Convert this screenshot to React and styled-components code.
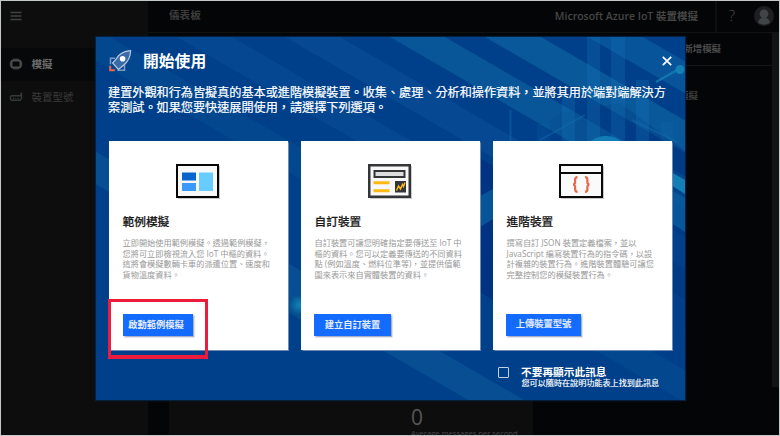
import React from "react";
import styled, { createGlobalStyle } from "styled-components";

const Global = createGlobalStyle`
  * { box-sizing: border-box; }
  html, body { margin: 0; padding: 0; overflow: hidden; background: #040507; }
  body { font-family: "Open Sans", "Noto Sans CJK TC", sans-serif; }
  button { font-family: inherit; }
`;

const Frame = styled.div`
  position: relative;
  width: 780px;
  height: 436px;
  display: flex;
  overflow: hidden;
  background: #040507;
  border: 1px solid #c3c9c8;
`;

const Sidebar = styled.nav`
  width: 147px;
  flex: none;
  background: #0d0d0d;
  display: flex;
  flex-direction: column;
`;

const MenuToggle = styled.div`
  height: 47px;
  padding: 10px 0 0 9px;
  svg { display: block; }
`;

const NavItem = styled.div`
  height: 33px;
  display: flex;
  align-items: center;
  gap: 8.5px;
  padding: 0 0 1px 8px;
  font-size: 10.5px;
  line-height: 16px;
  font-weight: ${(p) => (p.$active ? 700 : 400)};
  color: ${(p) => (p.$active ? "#6c6c6c" : "#3b3b3b")};
  background: ${(p) => (p.$active ? "#07080a" : "transparent")};
  svg { color: ${(p) => (p.$active ? "#4c4c4c" : "#34393c")}; flex: none; }
`;

const Main = styled.main`
  flex: 1;
  min-width: 0;
  display: flex;
  flex-direction: column;
`;

const Header = styled.header`
  height: 32px;
  flex: none;
  display: flex;
  align-items: center;
  padding-left: 21px;
  border-bottom: 1px solid #111214;
`;

const HeaderTitle = styled.div`
  font-size: 10.6px;
  line-height: 16px;
  padding-bottom: 3px;
  font-weight: 700;
  color: #3c3c3c;
`;

const Product = styled.div`
  margin-left: auto;
  padding: 0 17px 1px 0;
  font-size: 10.5px;
  line-height: 16px;
  font-weight: 600;
  color: #454545;
  white-space: nowrap;
`;

const Help = styled.div`
  width: 35px;
  height: 31px;
  line-height: 29px;
  padding-right: 3px;
  border-left: 2px solid #0d0e10;
  font-size: 15px;
  font-weight: 300;
  color: #4c4c4c;
  text-align: center;
`;

const Avatar = styled.div`
  width: 29px;
  padding: 0 0 1px 4px;
  svg { display: block; }
`;

const Body = styled.div`
  flex: 1;
  min-height: 0;
  display: flex;
`;

const Board = styled.section`
  flex: 1;
  display: flex;
  flex-direction: column;
`;

const Toolbar = styled.div`
  height: 33px;
  flex: none;
  border-bottom: 1px solid #151617;
  padding: 8px 51px 0 0;
  text-align: right;
  font-size: 9.4px;
  line-height: 16px;
  font-weight: 700;
  color: #4b4b4b;
`;

const BoardLabel = styled.div`
  padding: 22px 74px 0 0;
  text-align: right;
  font-size: 9.4px;
  line-height: 16px;
  font-weight: 700;
  color: #3e3e3e;
`;

const Metric = styled.div`
  width: 364px;
  height: 45px;
  margin: auto 0 0 21px;
  padding: 16px 0 0 242px;
  background: #0d0d0d;
  color: #565656;
  overflow: hidden;
`;

const MetricValue = styled.div`
  font-size: 21px;
  line-height: 22px;
  height: 22px;
`;

const MetricLabel = styled.div`
  font-size: 7.6px;
  line-height: 10px;
  height: 10px;
  color: #484848;
  white-space: nowrap;
`;

const Scrollbar = styled.div`
  width: 7px;
  height: 354px;
  background: #121315;
`;

const Modal = styled.section`
  position: absolute;
  left: 95px;
  top: 36px;
  width: 589px;
  height: 363px;
  overflow: hidden;
  background: #00408a;
  box-shadow: 0 0 1px 1px #06203f;
`;

const Art = styled.svg`
  position: absolute;
  inset: 0;
`;

const Content = styled.div`
  position: relative;
  height: 100%;
  padding: 11px 13px 0;
  display: flex;
  flex-direction: column;
  color: #fff;
`;

const TitleBar = styled.div`
  height: 25px;
  margin-left: -1px;
  display: flex;
  align-items: center;
  gap: 11px;
`;

const Title = styled.h1`
  margin: 0;
  font-size: 15.8px;
  line-height: 24px;
  font-weight: 700;
`;

const Close = styled.button`
  margin-left: auto;
  padding: 0;
  border: 0;
  background: none;
  height: 10px;
  display: flex;
`;

const Intro = styled.p`
  margin: 13px 0 0 -1px;
  font-size: 12.13px;
  line-height: 14.5px;
  white-space: pre;
  -webkit-text-stroke: 0.2px #fff;
`;

const Cards = styled.div`
  margin-top: 26px;
  display: grid;
  grid-template-columns: 179px 179px 179px;
  column-gap: 13px;
`;

const Card = styled.article`
  height: 209px;
  background: #fff;
  box-shadow: 0 0 1px 0.5px #6d8bb5;
  display: flex;
  flex-direction: column;
  align-items: flex-start;
  padding: 23px 0 0 14px;
`;

const IconSlot = styled.div`
  align-self: center;
  height: 38px;
  margin-left: -16px;
  svg { display: block; }
`;

const CardTitle = styled.h2`
  margin: 10px 0 0 -0.5px;
  font-size: 11.7px;
  line-height: 18px;
  height: 18px;
  font-weight: 500;
  color: #1a1a1a;
  -webkit-text-stroke: 0.2px #1a1a1a;
`;

const CardText = styled.p`
  margin: 8px 0 0 -0.5px;
  font-size: 8.2px;
  line-height: 10.7px;
  height: 43px;
  white-space: pre;
  color: #999;
`;

const Action = styled.button`
  width: ${(p) => p.$width}px;
  height: 22px;
  margin: 33px 0 0 ${(p) => p.$shift || 0}px;
  padding: 0 ${(p) => p.$end}px ${(p) => p.$lift || 0}px 0;
  border: 0;
  background: #136bff;
  box-shadow: 1px 1px 1.5px 0.5px #a8aec4;
  color: #e6edff;
  font-size: 9.25px;
  line-height: 20px;
  font-weight: ${(p) => (p.$lift ? 500 : 700)};
  -webkit-text-stroke: ${(p) => (p.$lift ? "0.2px #e6edff" : "0")};
  white-space: nowrap;
`;

const Footer = styled.label`
  margin: 16px 0 0 389px;
  display: flex;
  gap: 12px;
`;

const Checkbox = styled.span`
  width: 11px;
  height: 11px;
  margin-top: 1px;
  border: 1px solid #c3cfe2;
  border-radius: 1px;
`;

const FooterText = styled.span`
  display: flex;
  flex-direction: column;
  white-space: nowrap;
`;

const FooterMain = styled.span`
  font-size: 10.7px;
  line-height: 12px;
  height: 12px;
  font-weight: 700;
`;

const FooterHint = styled.span`
  font-size: 8.1px;
  line-height: 10px;
  padding-left: 0.5px;
  -webkit-text-stroke: 0.15px #fff;
`;

const Highlight = styled.div`
  position: absolute;
  left: 107px;
  top: 298px;
  width: 100px;
  height: 60px;
  border: 3px solid #ee1c3c;
  border-bottom-width: 4px;
`;

const MenuIcon = () => (
  <svg width="12" height="10" viewBox="0 0 12 10">
    <path d="M0.5 1.5h11M0.5 5h11M0.5 8.5h11" stroke="#3f4343" strokeWidth="1.4" />
  </svg>
);

const ChipIcon = () => (
  <svg width="14" height="14" viewBox="0 0 14 14" fill="none" stroke="currentColor">
    <rect x="2.5" y="3.5" width="9" height="7" rx="1.5" strokeWidth="2" />
    <path d="M4 2.2h6M4 11.8h6M1.4 5v4M12.6 5v4" strokeWidth="1" />
  </svg>
);

const DeviceIcon = () => (
  <svg width="14" height="12" viewBox="0 0 14 12" fill="none" stroke="currentColor">
    <path d="M2.5 4.8h9l1-3v5.5l-1.5 2H2.5l-1-1V5.7z" strokeWidth="1.4" />
    <path d="M4 7.3h1M6.2 7.3h1M8.4 7.3h1" strokeWidth="1.2" />
  </svg>
);

const UserIcon = () => (
  <svg width="20" height="20" viewBox="0 0 20 20">
    <circle cx="10" cy="10" r="10" fill="#1d1e20" />
    <circle cx="10" cy="7.8" r="4.4" fill="#414446" />
    <path d="M4 16.5c.8-3.6 3-4.7 6-4.7s5.2 1.1 6 4.7c-3 2.8-9 2.8-12 0z" fill="#414446" />
  </svg>
);

const RocketIcon = () => (
  <svg width="24" height="24" viewBox="0 0 24 24">
    <path d="M7 9.2H2.5v6M9.5 21.3h7v-6" fill="none" stroke="#7d9cc4" strokeWidth="1.5" />
    <path d="M22.6 1.6C16 2 11 5 8.5 9.6L4.6 14l5.8 6.5 4.8-4C19.5 13.5 22.5 8 22.6 1.6z" fill="#3a6aa8" stroke="#b9c9de" strokeWidth="1.2" />
    <circle cx="14.6" cy="9.8" r="2.8" fill="#fff" />
    <path d="M2.2 16.8v4.5h4.6" fill="none" stroke="#f0664a" strokeWidth="2" />
  </svg>
);

const CloseIcon = () => (
  <svg width="10" height="10" viewBox="0 0 10 10">
    <path d="M.8.8l8.4 8.4M9.2.8L.8 9.2" stroke="#fff" strokeWidth="1.7" />
  </svg>
);

const DashboardIcon = () => (
  <svg width="44" height="35" viewBox="0 0 44 35">
    <rect x="2" y="2" width="42" height="33" fill="#c9c9c9" />
    <rect x="1" y="1" width="41" height="32" fill="#f8f8f8" stroke="#050505" strokeWidth="2" />
    <rect x="6" y="8.5" width="14" height="8" fill="#0963cf" />
    <rect x="6" y="19" width="14" height="8" fill="#3a99fb" />
    <rect x="23" y="8.5" width="14" height="18.5" fill="#67ccff" />
  </svg>
);

const CustomIcon = () => (
  <svg width="44" height="35" viewBox="0 0 44 35">
    <rect x="2" y="2" width="42" height="33" fill="#cacaca" />
    <rect x="1.25" y="1.25" width="40.5" height="31.5" fill="#f8f8f8" stroke="#333536" strokeWidth="2.5" />
    <rect x="6.5" y="7" width="30" height="6" fill="#ddd" stroke="#333536" strokeWidth="2" />
    <path d="M5.5 18.8h16M5.5 26.8h16" stroke="#fdb913" strokeWidth="3" />
    <rect x="27" y="17" width="11" height="11.5" fill="#333536" />
    <path d="M28.5 26.5l2-4.5 2 3 2-4.5 1 2 1.5-4" fill="none" stroke="#fdb913" strokeWidth="1.4" />
  </svg>
);

const JsonIcon = () => (
  <svg width="45" height="35" viewBox="0 0 45 35">
    <rect x="2" y="2" width="43" height="33" fill="#cacaca" />
    <rect x="1" y="1" width="42" height="32" fill="#fafafa" stroke="#090909" strokeWidth="2" />
    <path d="M1 9h42" stroke="#090909" strokeWidth="2" />
    <path d="M18.5 13.2c-2.2 0-2.4.8-2.4 2.5v2.3c0 1.500-.5 2.300-2 2.500 1.500.2 2 1 2 2.500v2.300c0 1.700.2 2.500 2.400 2.500M26 13.200c2.200 0 2.400.8 2.400 2.500v2.300c0 1.500.5 2.300 2 2.500-1.500.2-2 1-2 2.500v2.300c0 1.700-.2 2.500-2.400 2.500" fill="none" stroke="#e8694a" strokeWidth="2.2" />
  </svg>
);

/* Diagonal bands: [x at the top edge, width, colour, opacity] */
const BANDS = [
  [-158, 56, "#0d5c9c", 0.5],
  [55, 55, "#0b5a9c", 0.3],
  [177, 55, "#0e559e", 0.35],
  [285, 55, "#0e559e", 0.4],
  [390, 55, "#0b5d9c", 0.75],
  [485, 56, "#0b5d9c", 0.85],
  [588, 55, "#0b62a5", 0.6],
];

const Backdrop = () => (
  <Art width="589" height="363" viewBox="96 37 589 363">
    <defs>
      <linearGradient id="deep" x1="0" x2="1">
        <stop offset="0" stopColor="#00337f" stopOpacity="0" />
        <stop offset="1" stopColor="#00337f" />
      </linearGradient>
      <radialGradient id="glow">
        <stop offset="0" stopColor="#178fbd" />
        <stop offset="1" stopColor="#178fbd" stopOpacity="0" />
      </radialGradient>
    </defs>
    {BANDS.map(([x, w, fill, o]) => (
      <polygon key={x} points={`${x},37 ${x + w},37 ${x + w + 640},408 ${x + 640},408`} fill={fill} opacity={o} />
    ))}
    <path d="M480 158l13 8V300l-13-8z" fill="#002f7e" opacity=".8" />
    <path d="M520 141l40-28 60-10 65 48v180l-14-8V141z" fill="url(#deep)" opacity=".45" />
    <path d="M480 196l13-7v30l-13 8zM671 190l14 8v34l-14-9z" fill="#095c9f" opacity=".8" />
    <path d="M671 172l14 8v14l-14-9z" fill="#147fb4" />
    <path d="M288 292l13 8v20l-13-8z" fill="#075591" opacity=".7" />
    <circle cx="299" cy="305" r="10" fill="url(#glow)" opacity=".8" />
    <g fill="#1878bd" opacity=".27">
      <rect x="587" y="37" width="13" height="104" />
      <rect x="611" y="37" width="14" height="104" />
      <rect x="562" y="95" width="13" height="46" />
      <rect x="636" y="80" width="13" height="61" />
      <rect x="537" y="124" width="13" height="17" opacity=".5" />
      <rect x="661" y="122" width="12" height="19" opacity=".5" />
    </g>
    <path d="M510.5 110v31M540 140l45-25M632 120l45 22" stroke="#1670b5" strokeWidth="2" opacity=".4" fill="none" />
    <path d="M656 82l23-13" stroke="#137fb5" strokeWidth="2.5" opacity=".8" />
    <circle cx="680" cy="69.5" r="4.5" fill="#1480b3" />
    <ellipse cx="606" cy="146" rx="17" ry="10" fill="#137bb5" />
  </Art>
);

const OPTIONS = [
  {
    title: "範例模擬",
    icon: <DashboardIcon />,
    text: "立即開始使用範例模擬。透過範例模擬\uFF0C\n您將可立即檢視流入您 IoT 中樞的資料。\n這將會模擬數輛卡車的派遣位置、速度和\n貨物溫度資料。",
    action: "啟動範例模擬",
    width: 70,
    end: 4,
  },
  {
    title: "自訂裝置",
    icon: <CustomIcon />,
    text: "自訂裝置可讓您明確指定要傳送至 IoT 中\n樞的資料。您可以定義要傳送的不同資料\n點 (例如溫度、燃料位準等)\uFF0C並提供值範\n圍來表示來自實體裝置的資料。",
    action: "建立自訂裝置",
    width: 77,
    end: 0,
    shift: -1,
  },
  {
    title: "進階裝置",
    icon: <JsonIcon />,
    text: "撰寫自訂 JSON 裝置定義檔案\uFF0C並以\nJavaScript 編寫裝置行為的指令碼\uFF0C以設\n計複雜的裝置行為。進階裝置體驗可讓您\n完整控制您的模擬裝置行為。",
    action: "上傳裝置型號",
    width: 75,
    end: 0,
    shift: -1,
    lift: 2,
  },
];

export default function App() {
  return (
    <>
      <Global />
      <Frame>
        <Sidebar>
          <MenuToggle><MenuIcon /></MenuToggle>
          <NavItem $active><ChipIcon />模擬</NavItem>
          <NavItem><DeviceIcon />裝置型號</NavItem>
        </Sidebar>
        <Main>
          <Header>
            <HeaderTitle>儀表板</HeaderTitle>
            <Product>Microsoft Azure IoT 裝置模擬</Product>
            <Help>?</Help>
            <Avatar><UserIcon /></Avatar>
          </Header>
          <Body>
            <Board>
              <Toolbar>新增模擬</Toolbar>
              <BoardLabel>模擬</BoardLabel>
              <Metric>
                <MetricValue>0</MetricValue>
                <MetricLabel>Average messages per second</MetricLabel>
              </Metric>
            </Board>
            <Scrollbar />
          </Body>
        </Main>
        <Modal>
          <Backdrop />
          <Content>
            <TitleBar>
              <RocketIcon />
              <Title>開始使用</Title>
              <Close aria-label="關閉"><CloseIcon /></Close>
            </TitleBar>
            <Intro>{"建置外觀和行為皆擬真的基本或進階模擬裝置。收集、處理、分析和操作資料\uFF0C並將其用於端對端解決方\n案測試。如果您要快速展開使用\uFF0C請選擇下列選項。"}</Intro>
            <Cards>
              {OPTIONS.map((o) => (
                <Card key={o.title}>
                  <IconSlot>{o.icon}</IconSlot>
                  <CardTitle>{o.title}</CardTitle>
                  <CardText>{o.text}</CardText>
                  <Action $width={o.width} $end={o.end} $shift={o.shift} $lift={o.lift}>{o.action}</Action>
                </Card>
              ))}
            </Cards>
            <Footer>
              <Checkbox />
              <FooterText>
                <FooterMain>不要再顯示此訊息</FooterMain>
                <FooterHint>您可以隨時在說明功能表上找到此訊息</FooterHint>
              </FooterText>
            </Footer>
          </Content>
        </Modal>
        <Highlight />
      </Frame>
    </>
  );
}
